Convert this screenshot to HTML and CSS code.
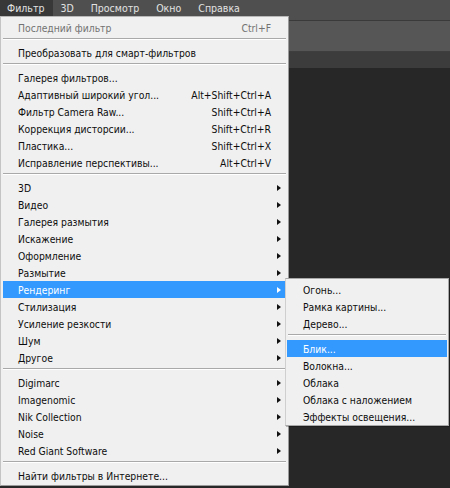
FILE: index.html
```html
<!DOCTYPE html>
<html lang="ru">
<head>
<meta charset="utf-8">
<title>Фильтр</title>
<link rel="stylesheet" href="styles.css">
</head>
<body>
<div class="app">
  <div class="menubar">
    <div class="mb-item active">Фильтр</div>
    <div class="mb-item">3D</div>
    <div class="mb-item">Просмотр</div>
    <div class="mb-item">Окно</div>
    <div class="mb-item">Справка</div>
  </div>
  <div class="band top"></div>
  <div class="band options"></div>
  <div class="band tabs"></div>
  <div class="workspace"></div>

  <div class="menu main">
    <div class="row disabled"><span class="label">Последний фильтр</span><span class="key">Ctrl+F</span></div>
    <div class="sep"></div>
    <div class="row"><span class="label">Преобразовать для смарт-фильтров</span></div>
    <div class="sep"></div>
    <div class="row"><span class="label">Галерея фильтров...</span></div>
    <div class="row"><span class="label">Адаптивный широкий угол...</span><span class="key">Alt+Shift+Ctrl+A</span></div>
    <div class="row"><span class="label">Фильтр Camera Raw...</span><span class="key">Shift+Ctrl+A</span></div>
    <div class="row"><span class="label">Коррекция дисторсии...</span><span class="key">Shift+Ctrl+R</span></div>
    <div class="row"><span class="label">Пластика...</span><span class="key">Shift+Ctrl+X</span></div>
    <div class="row"><span class="label">Исправление перспективы...</span><span class="key">Alt+Ctrl+V</span></div>
    <div class="sep"></div>
    <div class="row sub"><span class="label">3D</span><span class="arrow"></span></div>
    <div class="row sub"><span class="label">Видео</span><span class="arrow"></span></div>
    <div class="row sub"><span class="label">Галерея размытия</span><span class="arrow"></span></div>
    <div class="row sub"><span class="label">Искажение</span><span class="arrow"></span></div>
    <div class="row sub"><span class="label">Оформление</span><span class="arrow"></span></div>
    <div class="row sub"><span class="label">Размытие</span><span class="arrow"></span></div>
    <div class="row sub hl"><span class="label">Рендеринг</span><span class="arrow"></span></div>
    <div class="row sub"><span class="label">Стилизация</span><span class="arrow"></span></div>
    <div class="row sub"><span class="label">Усиление резкости</span><span class="arrow"></span></div>
    <div class="row sub"><span class="label">Шум</span><span class="arrow"></span></div>
    <div class="row sub"><span class="label">Другое</span><span class="arrow"></span></div>
    <div class="sep"></div>
    <div class="row sub"><span class="label">Digimarc</span><span class="arrow"></span></div>
    <div class="row sub"><span class="label">Imagenomic</span><span class="arrow"></span></div>
    <div class="row sub"><span class="label">Nik Collection</span><span class="arrow"></span></div>
    <div class="row sub"><span class="label">Noise</span><span class="arrow"></span></div>
    <div class="row sub"><span class="label">Red Giant Software</span><span class="arrow"></span></div>
    <div class="sep"></div>
    <div class="row"><span class="label">Найти фильтры в Интернете...</span></div>
  </div>

  <div class="menu submenu">
    <div class="row"><span class="label">Огонь...</span></div>
    <div class="row"><span class="label">Рамка картины...</span></div>
    <div class="row"><span class="label">Дерево...</span></div>
    <div class="sep"></div>
    <div class="row hl"><span class="label">Блик...</span></div>
    <div class="row"><span class="label">Волокна...</span></div>
    <div class="row"><span class="label">Облака</span></div>
    <div class="row"><span class="label">Облака с наложением</span></div>
    <div class="row"><span class="label">Эффекты освещения...</span></div>
  </div>
</div>
</body>
</html>
```
FILE: styles.css
```css
html, body {
  margin: 0;
  padding: 0;
}
body {
  width: 450px;
  height: 488px;
  overflow: hidden;
  background: #272727;
  font-family: "DejaVu Sans Condensed", "DejaVu Sans", sans-serif;
  font-size: 10.3px;
}
.app {
  position: relative;
  width: 450px;
  height: 488px;
  display: flex;
  flex-direction: column;
}
.menubar {
  height: 16px;
  background: #4f4f4f;
  display: flex;
  align-items: stretch;
  font-size: 10.5px;
}
.mb-item {
  padding: 0 10px 0 7px;
  color: #e2e2e2;
  line-height: 16px;
}
.mb-item.active {
  background: #383838;
  padding-right: 9px;
}
.band.top {
  height: 4px;
  background: #4f4f4f;
  border-bottom: 1px solid #3a3a3a;
}
.band.options {
  height: 30px;
  background: #565656;
  border-bottom: 1px solid #3e3e3e;
}
.band.tabs {
  height: 16px;
  background: #3c3c3c;
}
.workspace {
  flex: 1;
  background: #272727;
}
.menu {
  position: absolute;
  background: #f0f0f0;
  border: 1px solid #9a9a9a;
  box-sizing: border-box;
  display: flex;
  flex-direction: column;
}
.menu.main {
  left: 0;
  top: 16px;
  width: 289px;
  padding: 2px 0 1px;
  border-top-color: #b8b8b8;
  border-left-color: #c4c4c4;
}
.menu.submenu {
  left: 285px;
  top: 278px;
  width: 164px;
  padding: 2px 0 0;
  border-color: #a8a8a8;
  border-left-color: #cfcfcf;
  box-shadow: 1px 1px 0 rgba(0,0,0,0.25);
}
.row {
  height: 17px;
  display: flex;
  align-items: center;
  padding: 0 15px 0 17px;
  color: #0d0d0d;
  white-space: nowrap;
}
.main .row {
  margin: 0 2px 0 0;
  padding-left: 17px;
}
.submenu .row {
  margin: 0 1px;
  padding-left: 16px;
}
.row.sub {
  padding-right: 5px;
}
.label {
  flex: 1;
}
.key {
  margin-left: 20px;
}
.row.disabled {
  color: #727272;
}
.row.hl {
  background: #3399ff;
  color: #fff;
}
.main .row.hl {
  margin-left: 2px;
  padding-left: 15px;
}
.arrow {
  width: 0;
  height: 0;
  border-left: 4px solid #111;
  border-top: 3px solid transparent;
  border-bottom: 3px solid transparent;
}
.row.hl .arrow {
  border-left-color: #fff;
}
.sep {
  height: 0;
  margin: 2px 2px 4px 2px;
  border-top: 1px solid #a9a9a9;
  border-bottom: 1px solid #ffffff;
}
```
